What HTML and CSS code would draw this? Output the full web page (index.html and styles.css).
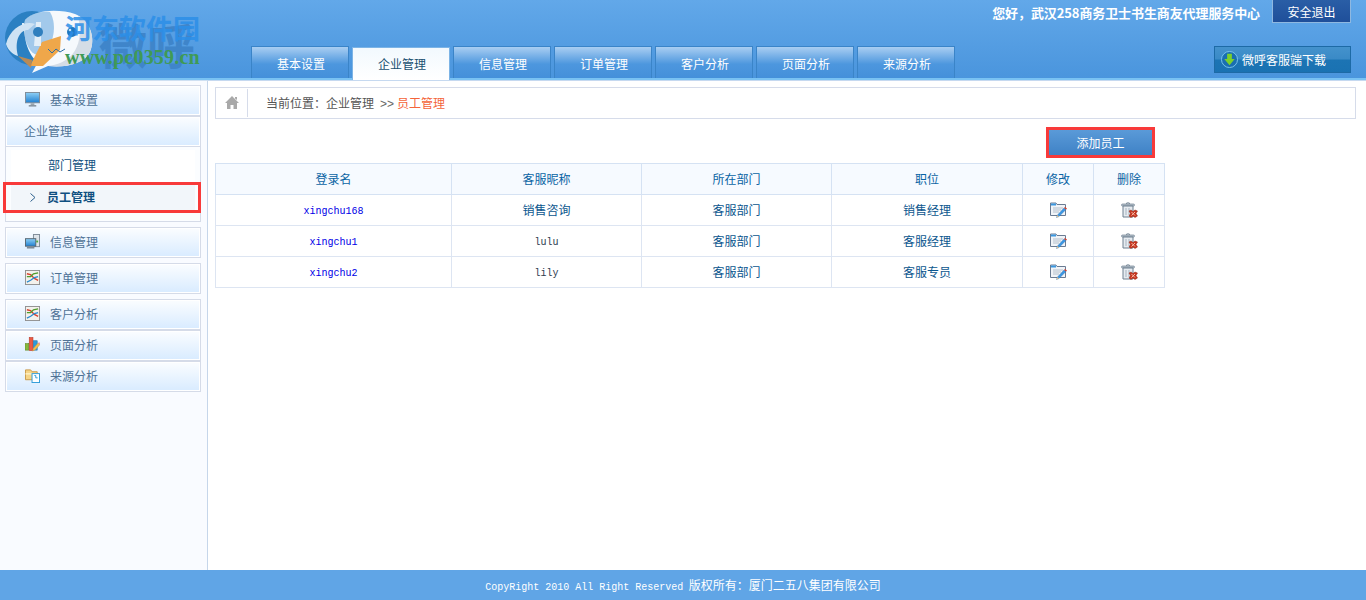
FILE: index.html
```html
<!DOCTYPE html>
<html lang="zh-CN">
<head>
<meta charset="utf-8">
<title>企业管理</title>
<link rel="stylesheet" href="styles.css">
</head>
<body>
<svg class="defs" width="0" height="0" aria-hidden="true">
  <defs>
    <linearGradient id="scr" x1="0" y1="0" x2="0" y2="1"><stop offset="0" stop-color="#8fd0f5"/><stop offset="1" stop-color="#1f7fd0"/></linearGradient>
    <symbol id="i-monitor" viewBox="0 0 16 16">
      <rect x="0.5" y="0.5" width="15" height="11" fill="url(#scr)" stroke="#7d8a96"/>
      <rect x="6" y="12" width="4" height="2" fill="#9aa5ae"/><rect x="4" y="14" width="8" height="1.5" fill="#7d8a96"/>
    </symbol>
    <symbol id="i-pc" viewBox="0 0 16 16">
      <rect x="9" y="0.5" width="6.5" height="13" fill="#dfe5ea" stroke="#7d8a96"/>
      <rect x="12" y="7" width="2" height="2" fill="#4caf3c"/>
      <rect x="0.5" y="5" width="11" height="8" fill="url(#scr)" stroke="#55646f"/>
      <rect x="2" y="13" width="8" height="2.5" fill="#7d8a96"/>
    </symbol>
    <symbol id="i-chart" viewBox="0 0 16 16">
      <rect x="0.5" y="0.5" width="15" height="15" fill="#f3f1ec" stroke="#8f8f8f"/>
      <path d="M2 4 L6 5 L10 9 L14 11" fill="none" stroke="#d8402c" stroke-width="1.4"/>
      <path d="M2 7 L6 7 L9 4 L14 3" fill="none" stroke="#4f9c2d" stroke-width="1.4"/>
      <path d="M2 13 L6 11 L10 8 L14 7" fill="none" stroke="#2b8bd0" stroke-width="1.4"/>
    </symbol>
    <symbol id="i-books" viewBox="0 0 16 16">
      <rect x="0" y="7" width="4" height="7" fill="#86b93c" stroke="#5b8526" stroke-width="0.6"/>
      <rect x="4.5" y="0.5" width="4" height="14" fill="#ea5a44" stroke="#b83a28" stroke-width="0.6"/>
      <rect x="9" y="4" width="4" height="10" fill="#2d9ad8" stroke="#1c6ea6" stroke-width="0.6"/>
      <path d="M8 15 L9 12 L14 6.5 L16 8 L11 13.5 Z" fill="#f3c14e" stroke="#c98e3a" stroke-width="0.5"/>
      <path d="M14 6.5 L15 5.5 L16.5 7 L16 8 Z" fill="#e88bb0"/>
    </symbol>
    <symbol id="i-folder" viewBox="0 0 16 16">
      <path d="M0.5 2 H6 L7.5 4 H13 V12.5 H0.5 Z" fill="#f6d588" stroke="#c99745"/>
      <rect x="0.5" y="5.5" width="12.5" height="1.5" fill="#fff1c4"/>
      <rect x="7.5" y="6" width="8" height="9.5" fill="#fff" stroke="#2b9ad8"/>
      <path d="M10 8 H11.5 V10.5 H13.5" fill="none" stroke="#2b9ad8"/>
    </symbol>
    <symbol id="i-edit" viewBox="0 0 17 16">
      <path d="M0.5 1 H6 L7 2.5 H15.5 V13.5 H0.5 Z" fill="#f1f4f8" stroke="#6a7b92"/>
      <rect x="1" y="1.5" width="5" height="2" fill="#3b97e0"/>
      <path d="M3 6 H13 M3 8 H11 M3 10 H9" stroke="#b4c0cc"/>
      <path d="M6.5 15.5 L7.5 13 L14 6 L16 7.5 L9 14.5 Z" fill="#3b97e4" stroke="#2a6aa8" stroke-width="0.4"/>
      <path d="M14 6 L15 5 L17 6.5 L16 7.5 Z" fill="#d8402c"/>
      <path d="M6.5 15.5 L7.5 13 L9 14.5 Z" fill="#e9c38a"/>
    </symbol>
    <symbol id="i-trash" viewBox="0 0 17 16">
      <path d="M5 1.5 Q7 0 9 1.5" fill="none" stroke="#6f8090"/>
      <rect x="0.5" y="2" width="13" height="2" rx="1" fill="#b8c3cd" stroke="#6f8090" stroke-width="0.7"/>
      <path d="M2 4 H12 V15 H2 Z" fill="#e6ebf0" stroke="#6f8090"/>
      <path d="M5 6 V13 M8 6 V13" stroke="#a7b4c0"/>
      <path d="M8 9 L10 8 L12 9.5 L14 8 L16.5 9 L15 11.5 L16.5 14 L14 15.5 L12 14 L10 15.5 L8 14 L9.5 11.5 Z" fill="#c8351f" stroke="#8f2412" stroke-width="0.5"/>
      <path d="M10.5 10 L14 13.5 M14 10 L10.5 13.5" stroke="#f4b8a4"/>
    </symbol>
    <symbol id="i-home" viewBox="0 0 14 13">
      <path d="M7 0 L14 7 H12 V13 H8.5 V9 H5.5 V13 H2 V7 H0 Z M10 1 H12 V4 L10 2.5 Z" fill="#a9a9a9"/>
    </symbol>
    <symbol id="i-down" viewBox="0 0 18 18">
      <circle cx="9" cy="9" r="8.5" fill="#1a6fb0" stroke="#7cc6ee"/>
      <path d="M6.5 3 H11.5 V8.5 H14.5 L9 15 L3.5 8.5 H6.5 Z" fill="#7bd02c"/>
    </symbol>
    <symbol id="i-chev" viewBox="0 0 6 9">
      <path d="M0.5 0.5 L5 4.5 L0.5 8.5" fill="none" stroke="#2c5f8c"/>
    </symbol>
  </defs>
</svg>

<header class="top">
  <div class="logo">
    <span class="logo-big">微呼</span>
    <svg class="logo-art" viewBox="0 0 100 78" width="100" height="78" aria-hidden="true">
      <circle cx="32" cy="38" r="27" fill="#2b80c2"/>
      <path d="M25 20 C35 9 60 9 75 14 C90 20 96 38 90 52 C84 64 65 68 48 66 L32 73 L38 62 C28 56 22 35 25 20 Z" fill="#f6f9fc"/>
      <path d="M78 16 C90 22 96 38 90 52 C84 64 65 68 48 66 C66 64 86 52 78 16 Z" fill="#d5dde6"/>
      <path d="M25 20 C30 14 40 11 50 12 C56 22 56 40 44 54 C34 58 28 50 25 38 Z" fill="#5da3dc" opacity="0.55"/>
      <path d="M6 44 C10 28 25 20 35 24 L28 30 C20 30 14 40 18 56 C12 54 8 50 6 44 Z" fill="#cfe3f4"/>
      <path d="M30 66 L42 42 L61 36 L60 50 L43 66 Z" fill="#efa74a"/>
      <path d="M18 56 L32 60 L31 68 Z" fill="#b98a55"/>
      <path d="M36 22 H41 V46 H34 Z" fill="#f2f7fb" opacity="0.8"/>
      <circle cx="38" cy="32" r="5" fill="#2f7fbe"/>
      <circle cx="72" cy="32" r="5" fill="#1f78c0"/>
      <circle cx="70" cy="30" r="1.3" fill="#bfe2f8"/>
      <path d="M22 23 L24 25 M24 23 L22 25" stroke="#dcecf8"/>
      <path d="M48 49 L52 53 L56 49 L60 52 L65 49" fill="none" stroke="#2b6fa8"/>
    </svg>
    <span class="logo-cn">河东软件园</span>
    <span class="logo-url">www.pc0359.cn</span>
  </div>
  <div class="top-row">
    <span class="hello">您好，武汉258商务卫士书生商友代理服务中心</span>
    <a class="logout">安全退出</a>
  </div>
  <div class="nav-row">
    <nav class="tabs">
      <a class="tab">基本设置</a>
      <a class="tab tab-on">企业管理</a>
      <a class="tab">信息管理</a>
      <a class="tab">订单管理</a>
      <a class="tab">客户分析</a>
      <a class="tab">页面分析</a>
      <a class="tab">来源分析</a>
    </nav>
    <a class="download"><svg class="ico-down"><use href="#i-down"/></svg>微呼客服端下载</a>
  </div>
</header>

<div class="body">
  <aside class="side">
    <div class="group">
      <a class="item"><svg class="ico"><use href="#i-monitor"/></svg>基本设置</a>
      <a class="item item-open">企业管理</a>
      <div class="sub">
        <a class="sub-row">部门管理</a>
        <a class="sub-row sub-on"><svg class="chev"><use href="#i-chev"/></svg>员工管理</a>
      </div>
    </div>
    <div class="group"><a class="item"><svg class="ico"><use href="#i-pc"/></svg>信息管理</a></div>
    <div class="group"><a class="item"><svg class="ico"><use href="#i-chart"/></svg>订单管理</a></div>
    <div class="group">
      <a class="item"><svg class="ico"><use href="#i-chart"/></svg>客户分析</a>
      <a class="item"><svg class="ico"><use href="#i-books"/></svg>页面分析</a>
      <a class="item"><svg class="ico"><use href="#i-folder"/></svg>来源分析</a>
    </div>
  </aside>

  <main class="main">
    <div class="crumb">
      <span class="crumb-home"><svg class="ico-home"><use href="#i-home"/></svg></span>
      <span class="crumb-text">当前位置：企业管理<span class="crumb-sep">&gt;&gt;</span><span class="crumb-now">员工管理</span></span>
    </div>
    <div class="toolbar"><a class="add">添加员工</a></div>
    <table class="grid">
      <colgroup>
        <col class="c1"><col class="c2"><col class="c3"><col class="c4"><col class="c5"><col class="c6">
      </colgroup>
      <thead>
        <tr><th>登录名</th><th>客服昵称</th><th>所在部门</th><th>职位</th><th>修改</th><th>删除</th></tr>
      </thead>
      <tbody>
        <tr><td class="login">xingchu168</td><td>销售咨询</td><td>客服部门</td><td>销售经理</td><td><svg class="act"><use href="#i-edit"/></svg></td><td><svg class="act"><use href="#i-trash"/></svg></td></tr>
        <tr><td class="login">xingchu1</td><td class="nick">lulu</td><td>客服部门</td><td>客服经理</td><td><svg class="act"><use href="#i-edit"/></svg></td><td><svg class="act"><use href="#i-trash"/></svg></td></tr>
        <tr><td class="login">xingchu2</td><td class="nick">lily</td><td>客服部门</td><td>客服专员</td><td><svg class="act"><use href="#i-edit"/></svg></td><td><svg class="act"><use href="#i-trash"/></svg></td></tr>
      </tbody>
    </table>
  </main>
</div>

<footer class="foot"><span class="foot-en">CopyRight 2010 All Right Reserved</span> 版权所有：厦门二五八集团有限公司</footer>
</body>
</html>
```

FILE: styles.css
```css
* { box-sizing: border-box; }
html, body { margin: 0; height: 100%; }
body {
  display: flex;
  flex-direction: column;
  height: 600px;
  overflow: hidden;
  font: 12px/1 "Noto Sans CJK SC", "Liberation Sans", sans-serif;
  background: #fff;
}
a { display: block; cursor: pointer; }
.defs { position: absolute; }

/* header */
.top {
  position: relative;
  flex: none;
  height: 80px;
  background: linear-gradient(#62a8e9, #4a95dd);
  border-bottom: 2px solid #79c2f3;
}
.top-row {
  display: flex;
  justify-content: flex-end;
  align-items: flex-start;
  gap: 12px;
  height: 46px;
  padding-right: 15px;
}
.hello {
  margin-top: 5px;
  font-size: 13px;
  line-height: 15px;
  font-weight: 700;
  letter-spacing: -0.1px;
  color: #fff;
}
.logout {
  width: 79px;
  height: 23px;
  border: 1px solid #8fb8e0;
  border-top: 0;
  background: linear-gradient(#2a5ea6, #1f4f9a);
  color: #fff;
  text-align: center;
  line-height: 23px;
}
.nav-row {
  display: flex;
  justify-content: space-between;
  padding: 0 15px 0 251px;
}
.tabs { display: flex; gap: 3px; }
.tab {
  width: 98px;
  height: 32px;
  padding-left: 2px;
  border: 1px solid #3a84c8;
  border-bottom: 0;
  background: linear-gradient(#a9cef2, #4d97de 55%, #4490da);
  color: #fff;
  text-align: center;
  line-height: 34px;
}
.tab-on {
  position: relative;
  height: 33px;
  margin-top: 1px;
  border-color: #7cb4e6;
  background: linear-gradient(#f2f9fe, #fff);
  color: #174f70;
  line-height: 32px;
}
.download {
  display: flex;
  align-items: center;
  gap: 4px;
  width: 137px;
  height: 27px;
  padding-left: 6px;
  border: 1px solid #1d6aa6;
  background: linear-gradient(#4492cc 0, #3a8ac6 48%, #1c74b4 52%, #1a72b2);
  color: #fff;
}
.ico-down { width: 17px; height: 17px; }

/* logo watermark */
.logo { position: absolute; left: 0; top: 0; width: 210px; height: 78px; }
.logo-art { position: absolute; left: 0; top: 0; }
.logo-big {
  position: absolute; left: 99px; top: 18px;
  font-size: 48px; line-height: 50px; font-weight: 700;
  color: #3f85ca;
}
.logo-cn {
  position: absolute; left: 65px; top: 13px;
  font-size: 27px; line-height: 30px; font-weight: 700;
  color: #2c8fe8; opacity: .85;
}
.logo-url {
  position: absolute; left: 65px; top: 47px;
  font: 700 20px/20px "Liberation Serif", serif;
  letter-spacing: .2px;
  color: #3f9a56;
}

/* body */
.body { flex: 1; display: flex; min-height: 0; }
.side {
  flex: none;
  width: 208px;
  padding: 4px 6px 0 5px;
  background: #f9fbff;
  border-right: 1px solid #c6d6ea;
  border-top: 1px solid #cfe0f2;
}
.group { margin-bottom: 5px; }
.item {
  display: flex;
  align-items: center;
  gap: 10px;
  height: 31px;
  padding: 0 0 2px 19px;
  border: 1px solid #d5dbe8;
  box-shadow: inset 0 0 0 1px #fff;
  background: linear-gradient(#fbfdff, #d8ebff);
  color: #4f7296;
}
.item-open { padding-left: 18px; }
.ico { width: 15px; height: 15px; flex: none; }
.sub {
  height: 75px;
  padding: 3px 5px 0;
  border: 1px solid #d5dbe8;
  border-top: 0;
  background: #fbfdff;
}
.sub-row {
  position: relative;
  display: flex;
  align-items: center;
  height: 32px;
  padding: 0 0 2px 37px;
  background: #fff;
  color: #0f4f80;
}
.sub-on {
  height: 31px;
  padding-left: 36px;
  background: #f2f6fa;
  font-weight: 700;
}
.sub-on::after {
  content: "";
  position: absolute;
  left: -8px;
  right: -6px;
  top: 0;
  bottom: 0;
  border: 3px solid #f83a3a;
}
.chev { position: absolute; left: 19px; top: 11px; width: 6px; height: 9px; }

/* main */
.main { flex: 1; min-width: 0; padding: 6px 10px 0 7px; border-top: 1px solid #c6d9f0; }
.crumb {
  display: flex;
  align-items: center;
  height: 32px;
  border: 1px solid #d6dcea;
  color: #555;
}
.crumb-home {
  display: flex;
  align-items: center;
  justify-content: center;
  width: 32px;
  height: 28px;
  border-right: 1px solid #d6dcea;
}
.ico-home { width: 14px; height: 13px; margin-top: -2px; }
.crumb-text { padding-left: 18px; }
.crumb-sep { margin: 0 3px 0 6px; font-family: "Liberation Sans", sans-serif; color: #666; }
.crumb-now { color: #f4643a; }
.toolbar { display: flex; justify-content: flex-end; width: 950px; margin-top: 8px; padding-right: 10px; }
.add {
  width: 109px;
  height: 31px;
  border: 3px solid #f83a3a;
  background: linear-gradient(#5a9ad8, #3f82c6);
  color: #fff;
  text-align: center;
  line-height: 25px;
}

/* table */
.grid {
  width: 949px;
  margin-top: 5px;
  table-layout: fixed;
  border-collapse: collapse;
  text-align: center;
}
.c1 { width: 236px; } .c2 { width: 190px; } .c3 { width: 190px; }
.c4 { width: 191px; } .c5 { width: 71px; } .c6 { width: 71px; }
.grid th, .grid td { height: 31px; padding: 0; border: 1px solid #dde5f2; }
.grid th {
  background: #f6faff;
  border-color: #d5e2f3;
  font-weight: 400;
  color: #0a64a4;
}
.grid td { color: #0b568e; }
.grid td.login { padding-top: 3px; font: 10px/1 "Liberation Mono", monospace; color: #0000e6; }
.grid td.nick { padding-top: 3px; font: 10px/1 "Liberation Mono", monospace; color: #2c3c50; }
.act { display: block; width: 17px; height: 16px; margin: 0 auto; }

/* footer */
.foot {
  flex: none;
  height: 30px;
  background: #60a5e6;
  color: #fff;
  text-align: center;
  line-height: 29px;
}
.foot-en { margin-right: 3px; font: 10px/29px "Liberation Mono", monospace; }
```
